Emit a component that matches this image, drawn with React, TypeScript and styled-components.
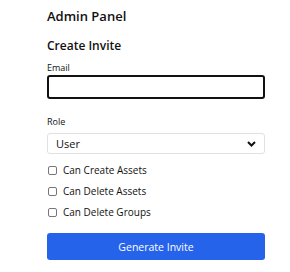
import React from "react";
import styled, { createGlobalStyle } from "styled-components";

const Global = createGlobalStyle`
  html, body { margin: 0; padding: 0; background: #ffffff; }
  body { font-family: "Open Sans", "Noto Sans", sans-serif; color: #111111; }
`;

const Page = styled.div`
  width: 218px;
  padding: 7px 0 0 47px;
  display: flex;
  flex-direction: column;
`;

const Title = styled.h1`
  margin: 0;
  font-size: 13px;
  font-weight: 600;
  line-height: 18px;
`;

const Subtitle = styled.h2`
  margin: 13px 0 0;
  font-size: 12px;
  font-weight: 600;
  line-height: 16px;
`;

const Field = styled.div<{ $mt: number }>`
  display: flex;
  flex-direction: column;
  margin-top: ${(p) => p.$mt}px;
`;

const Label = styled.label<{ $mb: number }>`
  font-size: 9px;
  font-weight: 500;
  line-height: 12px;
  margin-bottom: ${(p) => p.$mb}px;
`;

const Input = styled.input`
  box-sizing: border-box;
  height: 24px;
  width: 100%;
  border: 2px solid #111111;
  border-radius: 3px;
  padding: 0 4px;
  font: inherit;
  font-size: 11px;
  outline: none;
  caret-color: #111111;
`;

const SelectBox = styled.div`
  box-sizing: border-box;
  height: 21px;
  border: 1px solid #e1e1e1;
  border-radius: 3px;
  display: flex;
  align-items: center;
  padding: 0 8px;
  font-size: 11px;
`;

const Chevron = styled.svg`
  margin-left: auto;
`;

const Checks = styled.div`
  display: flex;
  flex-direction: column;
  gap: 7px;
  margin-top: 9px;
`;

const CheckRow = styled.label`
  display: flex;
  align-items: center;
  gap: 6px;
  font-size: 10px;
  line-height: 14px;
`;

const Box = styled.span`
  box-sizing: border-box;
  width: 9px;
  height: 9px;
  border: 1px solid #767676;
  border-radius: 2px;
  margin-left: 1px;
`;

const Button = styled.button`
  margin-top: 14px;
  height: 27px;
  border: none;
  border-radius: 3px;
  background: #2563eb;
  color: #ffffff;
  font: inherit;
  font-size: 10.5px;
`;

export default function App() {
  return (
    <>
      <Global />
      <Page>
        <Title>Admin Panel</Title>
        <Subtitle>Create Invite</Subtitle>
        <Field $mt={8}>
          <Label $mb={1}>Email</Label>
          <Input type="email" autoFocus />
        </Field>
        <Field $mt={17}>
          <Label $mb={5}>Role</Label>
          <SelectBox>
            User
            <Chevron width="9" height="6" viewBox="0 0 9 6">
              <path d="M1 1 L4.5 4.5 L8 1" fill="none" stroke="#111" strokeWidth="2" />
            </Chevron>
          </SelectBox>
        </Field>
        <Checks>
          <CheckRow><Box />Can Create Assets</CheckRow>
          <CheckRow><Box />Can Delete Assets</CheckRow>
          <CheckRow><Box />Can Delete Groups</CheckRow>
        </Checks>
        <Button>Generate Invite</Button>
      </Page>
    </>
  );
}
